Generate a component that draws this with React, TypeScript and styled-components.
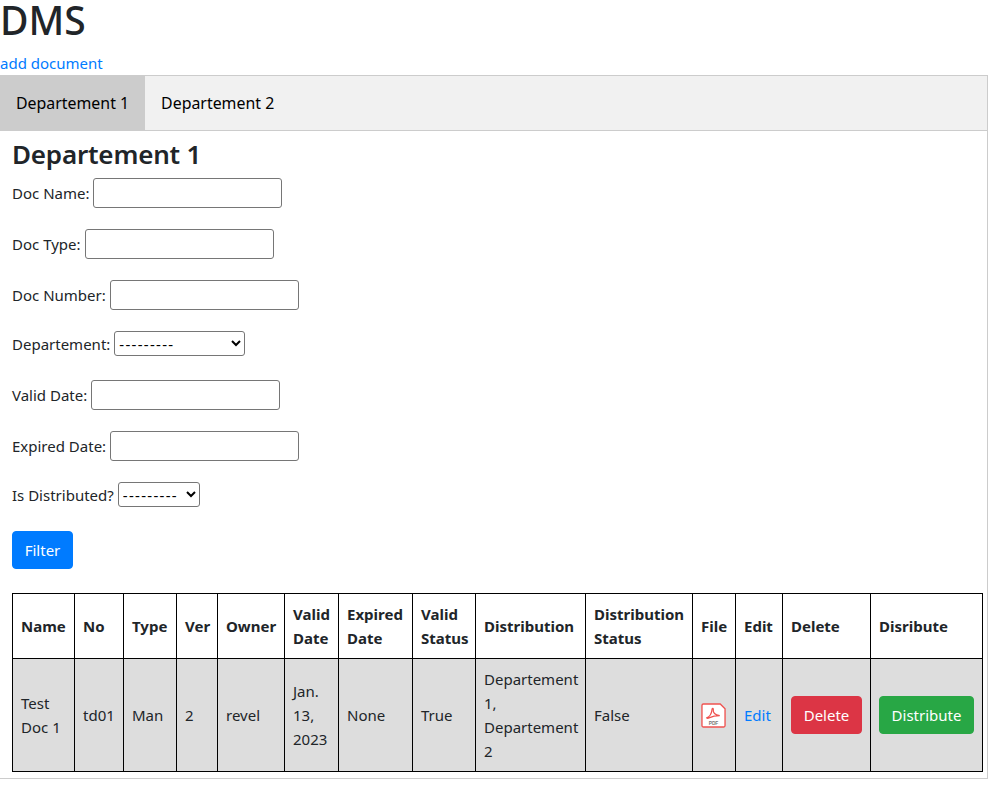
import React from "react";
import styled, { createGlobalStyle } from "styled-components";

const GlobalStyle = createGlobalStyle`
  html, body {
    margin: 0;
    padding: 0;
    background: #fff;
  }
  body {
    font-family: "Noto Sans", "Open Sans", sans-serif;
    font-size: 15px;
    line-height: 24px;
    color: #212529;
    overflow: hidden;
  }
  * {
    box-sizing: border-box;
  }
`;

const filterFields = [
  { label: "Doc Name:", kind: "input", width: 189 },
  { label: "Doc Type:", kind: "input", width: 189 },
  { label: "Doc Number:", kind: "input", width: 189 },
  { label: "Departement:", kind: "select", width: 131 },
  { label: "Valid Date:", kind: "input", width: 189 },
  { label: "Expired Date:", kind: "input", width: 189 },
  { label: "Is Distributed?", kind: "select", width: 82 },
];

const columns = [
  { title: "Name", width: 62 },
  { title: "No", width: 49 },
  { title: "Type", width: 53 },
  { title: "Ver", width: 41 },
  { title: "Owner", width: 67 },
  { title: "Valid Date", width: 54 },
  { title: "Expired Date", width: 74 },
  { title: "Valid Status", width: 63 },
  { title: "Distribution", width: 110 },
  { title: "Distribution Status", width: 107 },
  { title: "File", width: 43 },
  { title: "Edit", width: 47 },
  { title: "Delete", width: 88 },
  { title: "Disribute", width: 112 },
];

function PdfIcon() {
  return (
    <PdfSvg width="25" height="25" viewBox="0 0 26 26" aria-label="pdf">
      <path
        d="M2.500 1h17.500l5 5v17.500a1.500 1.500 0 0 1-1.500 1.500h-21A1.500 1.500 0 0 1 1 23.500v-21A1.500 1.500 0 0 1 2.500 1z"
        fill="#fff"
        stroke="#ef5350"
        strokeWidth="1.400"
      />
      <path
        d="M6 15.500c2.500-1 5-4.500 5.500-9 .3-1.500 1.500-1 1.300.5-.5 3 1.500 5.500 6.700 6.200-3.500 0-7.500.5-10.500 2-1 .5-2.500 1.200-3 .3z"
        fill="none"
        stroke="#ef5350"
        strokeWidth="1.300"
      />
      <text
        x="13"
        y="22.500"
        textAnchor="middle"
        fontSize="5"
        fontWeight="700"
        fill="#777"
        fontFamily="Liberation Sans, sans-serif"
      >
        PDF
      </text>
    </PdfSvg>
  );
}

export default function App() {
  return (
    <>
      <GlobalStyle />
      <Title>DMS</Title>
      <AddLink href="#">add document</AddLink>
      <Tabs>
        <TabButton $active>Departement 1</TabButton>
        <TabButton>Departement 2</TabButton>
      </Tabs>
      <TabContent>
        <SectionTitle>Departement 1</SectionTitle>
        <form>
          {filterFields.map((field) => (
            <FormRow key={field.label} $select={field.kind === "select"}>
              <label>{field.label}</label>
              {field.kind === "input" ? (
                <TextInput type="text" />
              ) : (
                <SelectInput $width={field.width}>
                  <option>---------</option>
                </SelectInput>
              )}
            </FormRow>
          ))}
          <Button type="button" $color="#007bff" $width={61}>
            Filter
          </Button>
        </form>
        <DocTable>
          <colgroup>
            {columns.map((col) => (
              <Col key={col.title} $width={col.width} />
            ))}
          </colgroup>
          <thead>
            <tr>
              {columns.map((col) => (
                <Th key={col.title}>{col.title}</Th>
              ))}
            </tr>
          </thead>
          <tbody>
            <BodyRow>
              <Td>Test Doc 1</Td>
              <Td>td01</Td>
              <Td>Man</Td>
              <Td>2</Td>
              <Td>revel</Td>
              <Td>Jan. 13, 2023</Td>
              <Td>None</Td>
              <Td>True</Td>
              <Td>Departement 1, Departement 2</Td>
              <Td>False</Td>
              <Td>
                <PdfIcon />
              </Td>
              <Td>
                <EditLink href="#">Edit</EditLink>
              </Td>
              <Td>
                <Button type="button" $color="#dc3545" $width={71}>
                  Delete
                </Button>
              </Td>
              <Td>
                <Button type="button" $color="#28a745" $width={95}>
                  Distribute
                </Button>
              </Td>
            </BodyRow>
          </tbody>
        </DocTable>
      </TabContent>
    </>
  );
}

const Title = styled.h1`
  margin: 0 0 11px;
  font-size: 39px;
  font-weight: 500;
  line-height: 40px;
`;

const AddLink = styled.a`
  display: block;
  color: #007bff;
  text-decoration: none;
`;

const Tabs = styled.div`
  display: flex;
  width: 988px;
  height: 56px;
  background: #f1f1f1;
  border: 1px solid #ccc;
  border-left: none;
`;

const TabButton = styled.button<{ $active?: boolean }>`
  border: none;
  padding: 14px 16px;
  font: inherit;
  font-size: 15.9px;
  color: #000;
  background: ${(props) => (props.$active ? "#ccc" : "transparent")};
`;

const TabContent = styled.div`
  width: 988px;
  padding: 6px 4px 5px 12px;
  border-right: 1px solid #ccc;
  border-bottom: 1px solid #ccc;
  padding-bottom: 6px;
`;

const SectionTitle = styled.h3`
  margin: 0 0 6px;
  font-size: 26px;
  font-weight: 600;
  letter-spacing: -0.2px;
  line-height: 35px;
`;

const FormRow = styled.div<{ $select?: boolean }>`
  display: flex;
  align-items: center;
  gap: 4px;
  margin-bottom: ${(props) => (props.$select ? "24px" : "21px")};
`;

const TextInput = styled.input`
  width: 189px;
  height: 30px;
  padding: 1px 2px;
  background: #fff;
  border: 1px solid #767676;
  border-radius: 3px;
`;

const SelectInput = styled.select<{ $width: number }>`
  width: ${(props) => props.$width}px;
  height: 25px;
  font: inherit;
  letter-spacing: 1.300px;
  color: #000;
  background: #fff;
  border: 1px solid #767676;
  border-radius: 3px;
`;

const Button = styled.button<{ $color: string; $width: number }>`
  display: inline-block;
  width: ${(props) => props.$width}px;
  height: 38px;
  padding: 0;
  font: inherit;
  color: #fff;
  white-space: nowrap;
  background: ${(props) => props.$color};
  border: 1px solid ${(props) => props.$color};
  border-radius: 4px;
`;

const DocTable = styled.table`
  width: 970px;
  margin-top: 24px;
  table-layout: fixed;
  border-collapse: collapse;
`;

const Col = styled.col<{ $width: number }>`
  width: ${(props) => props.$width}px;
`;

const Th = styled.th`
  padding: 8px;
  font-weight: 700;
  text-align: left;
  border: 1px solid #000;
`;

const BodyRow = styled.tr`
  background: #ddd;
`;

const Td = styled.td`
  padding: 8px;
  vertical-align: middle;
  border: 1px solid #000;
`;

const PdfSvg = styled.svg`
  display: block;
`;

const EditLink = styled.a`
  color: #007bff;
  text-decoration: none;
`;
